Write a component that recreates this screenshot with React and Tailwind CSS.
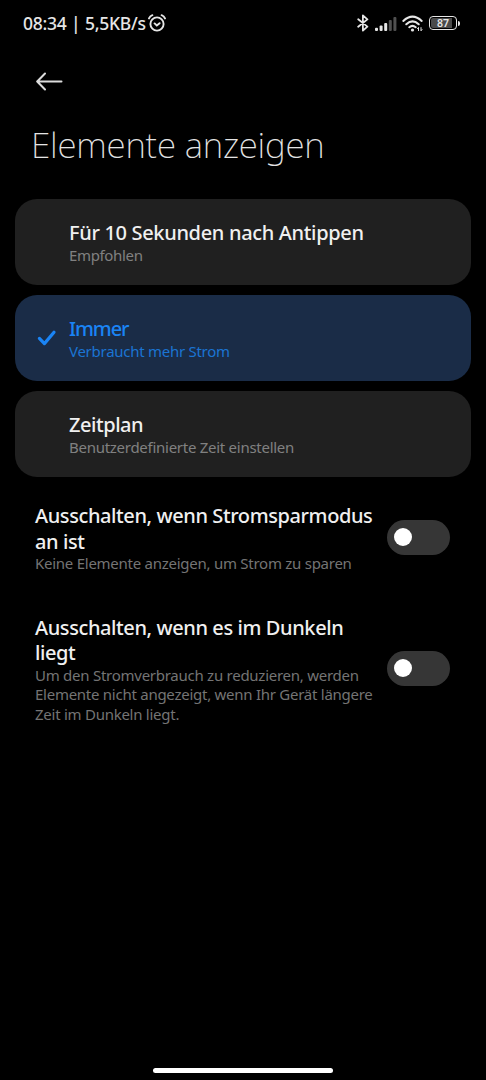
import React, { useState } from 'react';

const OPTIONS = [
  { id: 'tap', title: 'Für 10 Sekunden nach Antippen', summary: 'Empfohlen', titleClass: 'tracking-[-0.33px]', summaryClass: 'tracking-[-0.35px]' },
  { id: 'always', title: 'Immer', summary: 'Verbraucht mehr Strom', titleClass: 'tracking-[-1.1px]', summaryClass: 'tracking-[-0.27px]' },
  { id: 'schedule', title: 'Zeitplan', summary: 'Benutzerdefinierte Zeit einstellen', titleClass: 'tracking-[-0.45px]', summaryClass: 'tracking-[-0.27px]' },
];

const StatusBar = () => (
  <div className="flex h-[46px] items-center pl-[23px] pr-[25px] text-[#e6e6e6]">
    <span className="w-[122px] whitespace-nowrap text-[17.5px] font-medium leading-6 tracking-[-0.25px]">
      08:34<span className="mx-[4.5px]">|</span>5,5KB/s
    </span>
    {/* alarm clock */}
    <svg className="ml-[3px] h-[18px] w-[18px]" viewBox="0 0 18 18" fill="none" stroke="currentColor" strokeWidth="1.9" strokeLinecap="round">
      <circle cx="9" cy="10" r="6.6" />
      <path d="M6.6 9.4 8.8 11.5 11.6 9.2M1 4.4Q2 2 4.4 1.2M13.6 1.2Q16 2 17 4.4" />
    </svg>
    <div className="ml-auto flex items-center">
      <svg className="h-[18px] w-[12px]" viewBox="0 0 12 18" fill="none" stroke="currentColor" strokeWidth="1.8" strokeLinejoin="round" strokeLinecap="round">
        <path d="M1.2 5.2 10.4 12.6 5.9 16.6V1.4l4.5 4L1.2 12.8" />
      </svg>
      <svg className="ml-[6px] mt-px h-[14px] w-[22px]" viewBox="0 0 22 14" fill="currentColor">
        <rect x="0" y="10.8" width="3" height="3.2" rx="1" />
        <rect x="4.6" y="8.5" width="3" height="5.5" rx="1" />
        <rect x="9.2" y="6" width="3" height="8" rx="1" />
        <rect x="13.8" y="3" width="3" height="11" rx="1" opacity=".35" />
        <rect x="18.4" y="0" width="3" height="14" rx="1" opacity=".35" />
      </svg>
      <svg className="ml-[5px] h-[17px] w-[22px]" viewBox="0 0 22 17" fill="none" stroke="currentColor" strokeWidth="2.1" strokeLinecap="round">
        <path d="M1.3 5.9Q10.5-2.6 19.7 5.9M4.3 9.2Q10.5 3.6 16.7 9.2M7.3 12.2Q10.5 9.6 13.7 12.2" />
        <circle cx="10.5" cy="15" r="1.6" fill="currentColor" stroke="none" />
        <path d="M16.5 15.6v-3.2l-1 1.2M19 12.6v3.2l1-1.2" strokeWidth="1" />
      </svg>
      <div className="ml-[5px] mr-px flex h-[14px] w-[28px] items-center justify-center rounded-[4px] border-[1.5px] border-[#e6e6e6] p-px">
        <div className="flex h-full w-full items-center justify-center rounded-[2px] bg-linear-to-r from-[#4a4a4a] from-87% to-transparent to-87% text-[10.5px] font-semibold leading-none">
          87
        </div>
      </div>
      <div className="mr-px h-[5px] w-[2px] rounded-r bg-[#e6e6e6]" />
    </div>
  </div>
);

const Option = ({ option, selected, onSelect }) => (
  <button
    onClick={onSelect}
    className={`flex h-[86px] w-full items-center rounded-[22px] text-left ${selected ? 'bg-[#1a2c47] text-[#1a84f5]' : 'bg-[#202020] text-[#f0f0f0]'}`}
  >
    <span className="flex w-[54px] shrink-0 pl-[22px]">
      {selected && (
        <svg className="h-[18px] w-[20px]" viewBox="0 0 20 18" fill="none" stroke="currentColor" strokeWidth="3.2" strokeLinecap="round" strokeLinejoin="round">
          <path d="M2.4 9.4 7.4 14.6 17 3.2" />
        </svg>
      )}
    </span>
    <span className="flex flex-col whitespace-nowrap pt-[2px]">
      <span className={`text-[20px] font-medium leading-[25px] ${option.titleClass}`}>{option.title}</span>
      <span className={`text-[15px] leading-[21px] ${option.summaryClass} ${selected ? 'text-[#1b74d3]' : 'text-[#808080]'}`}>
        {option.summary}
      </span>
    </span>
  </button>
);

const SwitchRow = ({ title, summary, checked, onChange }) => (
  <div className="flex items-center justify-between py-[19px] pl-[35px] pr-9">
    <div className="whitespace-nowrap pt-[2px]">
      {title.map((line) => (
        <div key={line} className="text-[20px] font-medium leading-[25.5px] tracking-[-0.4px] text-[#f0f0f0]">{line}</div>
      ))}
      {summary.map((line) => (
        <div key={line} className="text-[15px] leading-[19.5px] tracking-[-0.26px] text-[#747474]">{line}</div>
      ))}
    </div>
    <button
      role="switch"
      aria-checked={checked}
      onClick={onChange}
      className={`flex h-[35px] w-[63px] shrink-0 items-center rounded-full px-[7px] ${checked ? 'justify-end bg-[#1a84f5]' : 'bg-[#363636]'}`}
    >
      <span className="h-[18px] w-[18px] rounded-full bg-white" />
    </button>
  </div>
);

export default function App() {
  const [selected, setSelected] = useState('always');
  const [powerSave, setPowerSave] = useState(false);
  const [dark, setDark] = useState(false);

  return (
    <div className="flex h-[1080px] w-[486px] flex-col overflow-hidden bg-black font-['Noto_Sans',sans-serif]">
      <StatusBar />

      <div className="flex h-[70px] items-center pl-9">
        <svg className="h-5 w-[27px] text-[#dcdcdc]" viewBox="0 0 27 20" fill="none" stroke="currentColor" strokeWidth="2" strokeLinecap="round" strokeLinejoin="round">
          <path d="M25.5 10.5H1.4M9 2.5 1.2 10.5 9 18.5" />
        </svg>
      </div>

      <h1 className="h-[83px] whitespace-nowrap pl-[31px] pt-1.5 text-[35px] font-extralight leading-[46px] tracking-[-0.2px] text-[#e4e4e4]">
        Elemente anzeigen
      </h1>

      <div className="flex flex-col gap-[10px] px-[15px]">
        {OPTIONS.map((o) => (
          <Option key={o.id} option={o} selected={selected === o.id} onSelect={() => setSelected(o.id)} />
        ))}
      </div>

      <div className="mt-[5px] flex flex-col gap-px">
        <SwitchRow
          title={['Ausschalten, wenn Stromsparmodus', 'an ist']}
          summary={['Keine Elemente anzeigen, um Strom zu sparen']}
          checked={powerSave}
          onChange={() => setPowerSave(!powerSave)}
        />
        <SwitchRow
          title={['Ausschalten, wenn es im Dunkeln', 'liegt']}
          summary={['Um den Stromverbrauch zu reduzieren, werden', 'Elemente nicht angezeigt, wenn Ihr Gerät längere', 'Zeit im Dunkeln liegt.']}
          checked={dark}
          onChange={() => setDark(!dark)}
        />
      </div>

      {/* gesture bar */}
      <div className="mx-auto mb-[7px] mt-auto h-[5px] w-[180px] rounded-full bg-white" />
    </div>
  );
}
